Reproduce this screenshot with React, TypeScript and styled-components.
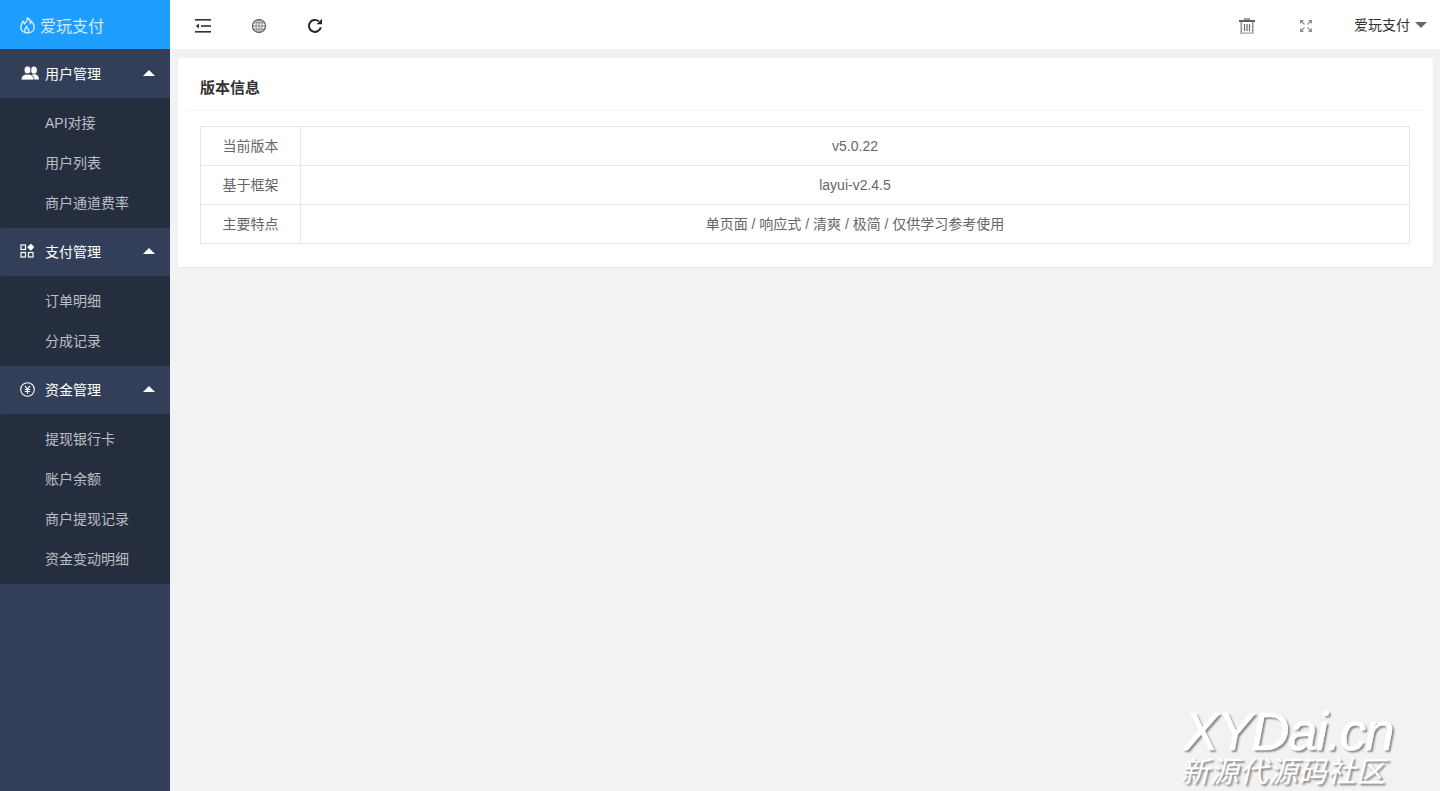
import styled, { createGlobalStyle } from "styled-components";

const GlobalStyle = createGlobalStyle`
    html, body {
        margin: 0;
        padding: 0;
        height: 100%;
    }
    body {
        font-family: "Liberation Sans", "Noto Sans CJK SC", sans-serif;
        font-size: 14px;
        color: #666;
        background: #f2f2f2;
        overflow: hidden;
    }
`;

const Page = styled.div`
    display: flex;
    height: 791px;
    position: relative;
`;
const Side = styled.aside`
    width: 170px;
    flex-shrink: 0;
    background: #333f58;
`;
const Logo = styled.div`
    height: 49px;
    box-sizing: border-box;
    padding: 1px 0 0 20px;
    margin-bottom: 1px;
    background: #1e9fff;
    display: flex;
    align-items: center;
    gap: 5px;
    font-size: 16px;
    color: rgba(255, 255, 255, 0.8);
`;
const GroupTitle = styled.div`
    height: 48px;
    box-sizing: border-box;
    display: flex;
    align-items: center;
    padding: 0 15px 2px 20px;
    color: #fff;
    font-size: 14px;
`;
const GroupIcon = styled.span`
    width: 15px;
    height: 15px;
    display: flex;
    align-items: center;
    margin-right: 10px;
    svg {
        flex-shrink: 0;
    }
`;
const Caret = styled.span`
    margin-left: auto;
    width: 0;
    height: 0;
    border-left: 6px solid transparent;
    border-right: 6px solid transparent;
    border-bottom: 6px solid #fff;
`;
const SubMenu = styled.div`
    background: #252e3f;
    padding: 5px 0;
    border-radius: 2px;
`;
const SubItem = styled.div`
    height: 40px;
    line-height: 40px;
    padding-left: 45px;
    color: rgba(255, 255, 255, 0.7);
`;
const Main = styled.main`
    flex: 1;
    min-width: 0;
`;
const TopBar = styled.header`
    height: 49px;
    box-sizing: border-box;
    background: #fff;
    display: flex;
    align-items: center;
    padding: 3px 13px 0 25px;
`;
const ToolIcon = styled.span<{ $gap: number }>`
    width: 16px;
    height: 16px;
    display: flex;
    margin-right: ${(p) => p.$gap}px;
`;
const RightTools = styled.div`
    margin-left: auto;
    display: flex;
    align-items: center;
`;
const UserName = styled.span`
    color: #333;
    font-size: 14px;
    margin: -5px 5px 0 0;
`;
const UserCaret = styled.span`
    width: 0;
    height: 0;
    margin-top: -2px;
    border-left: 6px solid transparent;
    border-right: 6px solid transparent;
    border-top: 6px solid #666;
`;
const Content = styled.div`
    padding: 9px 7px 0 8px;
`;
const Card = styled.section`
    background: #fff;
    border-radius: 2px;
    box-shadow: 0 1px 2px rgba(0, 0, 0, 0.05);
    padding: 0 7px;
    height: 209px;
    box-sizing: border-box;
`;
const CardHead = styled.div`
    height: 53px;
    line-height: 59px;
    padding-left: 15px;
    box-sizing: border-box;
    border-bottom: 1px solid #f6f6f6;
    color: #333;
    font-size: 15px;
    font-weight: 700;
`;
const CardBody = styled.div`
    padding: 15px 16px 0 15px;
`;
const Table = styled.table`
    width: 100%;
    border-collapse: collapse;
    table-layout: fixed;
`;
const Cell = styled.td<{ $head?: boolean; $cjk?: boolean }>`
    border: 1px solid #e6e6e6;
    height: ${(p) => (p.$cjk ? "36px" : "38px")};
    padding: 0 0 ${(p) => (p.$cjk ? "2px" : "0")};
    text-align: center;
    font-size: 14px;
    color: #666;
    width: ${(p) => (p.$head ? "99px" : "auto")};
`;
const Watermark = styled.div`
    position: absolute;
    right: 47px;
    bottom: 4px;
    color: #fff;
    font-style: italic;
    text-shadow: 2px 2px 2px rgba(0, 0, 0, 0.45);
    pointer-events: none;
`;
const MarkLatin = styled.div`
    font-size: 53px;
    line-height: 50px;
    letter-spacing: -1.400px;
    -webkit-text-stroke: 0.6px #fff;
`;
const MarkCjk = styled.div`
    font-size: 29px;
    line-height: 30px;
    letter-spacing: 0.3px;
    margin-left: -3px;
`;

const FlameIcon = () => (
    <svg width="15" height="17" viewBox="0 0 15 17" fill="none" stroke="rgba(255,255,255,0.85)" strokeWidth="1.300">
        <path d="M7.500 16C3.400 16 .8 13.600.8 10.200.8 7.800 2.200 6 3 4.200c.8.700 1.300 1.500 1.500 2.500C6.200 5.200 7.700 3 7.400.8c2.200 1.200 3.100 3.400 3 5.600.6-.5 1-1.200 1.100-2 1.700 1.600 2.700 3.700 2.700 5.800 0 3.400-2.600 5.800-6.700 5.800z" />
        <path d="M5.200 15.500c-1-2-.4-3.800 1.500-6 .1 1.600 1.100 2 1.800 3.100.6 1 .6 2 .1 2.900" />
    </svg>
);
const UsersIcon = () => (
    <svg width="18" height="14" viewBox="0 0 18 14" style={{ marginLeft: 1 }}>
        <g fill="#fff">
            <ellipse cx="13" cy="4.200" rx="2.900" ry="3.600" />
            <path d="M9 13.500c0-3 1.600-4.600 3-5.300h2.500c2 .7 3.500 2.300 3.500 5.300z" />
        </g>
        <g fill="#fff" stroke="#333f58" strokeWidth="0.800">
            <ellipse cx="6.500" cy="4" rx="3.500" ry="4" />
            <path d="M0 14c0-3.500 1.800-5 4.500-5.800h4c2.700.8 4.500 2.300 4.500 5.800z" />
        </g>
    </svg>
);
const AppsIcon = () => (
    <svg width="14" height="14" viewBox="0 0 14 14" fill="none" stroke="#fff" strokeWidth="1.200">
        <rect x="1" y="1" width="4.500" height="4.500" />
        <rect x="1" y="8.500" width="4.500" height="4.500" />
        <rect x="8.500" y="8.500" width="4.500" height="4.500" />
        <path d="M10.800.5l2.700 2.700-2.700 2.700-2.700-2.700z" fill="#fff" />
    </svg>
);
const YuanIcon = () => (
    <svg width="15" height="15" viewBox="0 0 15 15" fill="none" stroke="#fff" strokeWidth="1.100">
        <circle cx="7.500" cy="7.500" r="6.800" />
        <path d="M5 3.800l2.500 3.400L10 3.800M7.500 7.200v4.500M4.800 7.500h5.400M4.800 9.500h5.400" />
    </svg>
);
const IndentIcon = () => (
    <svg width="16" height="16" viewBox="0 0 16 16" fill="#333">
        <rect x="0" y="1" width="16" height="1.600" />
        <rect x="6" y="7.200" width="10" height="1.600" />
        <rect x="0" y="13" width="16" height="1.600" />
        <path d="M4 5.500v5L0.800 8z" />
    </svg>
);
const GlobeIcon = () => (
    <svg width="16" height="16" viewBox="0 0 16 16" fill="none">
        <g stroke="#7d8288" strokeWidth="1">
            <ellipse cx="8" cy="8" rx="3" ry="6.500" />
            <path d="M8 1.500v13M1.500 8h13M2.500 4.800h11M2.500 11.200h11" />
        </g>
        <circle cx="8" cy="8" r="6.500" stroke="#5d5348" strokeWidth="1.200" />
    </svg>
);
const RefreshIcon = () => (
    <svg width="16" height="16" viewBox="0 0 16 16" fill="none" stroke="#222" strokeWidth="1.900">
        <path d="M13.800 9.200A6 6 0 1 1 11.800 3.300" />
        <path d="M15 .8v5.400H9.600z" fill="#222" stroke="none" />
    </svg>
);
const TrashIcon = () => (
    <svg width="16" height="16" viewBox="0 0 16 16" fill="none">
        <path d="M5.500 1.500V1h5v.500" stroke="#444" strokeWidth="1.200" />
        <path d="M0 3h16" stroke="#333" strokeWidth="1.600" />
        <path d="M2.200 3.500v11.800h11.600V3.500" stroke="#777" strokeWidth="1.200" />
        <path d="M2 15.300h12" stroke="#bbb" strokeWidth="1.400" />
        <path d="M5.500 6v7M8 6v7M10.500 6v7" stroke="#6b6078" strokeWidth="1.200" />
    </svg>
);
const ExpandIcon = () => (
    <svg width="16" height="16" viewBox="0 0 16 16" fill="none" stroke="#8a8c92" strokeWidth="1.100">
        <path d="M3.500 3.500L6.500 6.500M12.500 3.500L9.500 6.500M3.500 12.500L6.500 9.500M12.500 12.500L9.500 9.500" />
        <path d="M2 2h4L2 6zM14 2h-4l4 4zM2 14h4l-4-4zM14 14h-4l4-4z" fill="#8a8c92" stroke="none" />
    </svg>
);

const menu = [
    { title: "用户管理", icon: <UsersIcon />, items: ["API对接", "用户列表", "商户通道费率"] },
    { title: "支付管理", icon: <AppsIcon />, items: ["订单明细", "分成记录"] },
    { title: "资金管理", icon: <YuanIcon />, items: ["提现银行卡", "账户余额", "商户提现记录", "资金变动明细"] },
];
const versionRows = [
    { label: "当前版本", value: "v5.0.22", cjk: false },
    { label: "基于框架", value: "layui-v2.4.5", cjk: false },
    { label: "主要特点", value: "单页面 / 响应式 / 清爽 / 极简 / 仅供学习参考使用", cjk: true },
];

export default function App() {
    return (
        <>
            <GlobalStyle />
            <Page>
                <Side>
                    <Logo><FlameIcon />爱玩支付</Logo>
                    {menu.map((group) => (
                        <div key={group.title}>
                            <GroupTitle>
                                <GroupIcon>{group.icon}</GroupIcon>
                                {group.title}
                                <Caret />
                            </GroupTitle>
                            <SubMenu>
                                {group.items.map((item) => <SubItem key={item}>{item}</SubItem>)}
                            </SubMenu>
                        </div>
                    ))}
                </Side>
                <Main>
                    <TopBar>
                        <ToolIcon $gap={40}><IndentIcon /></ToolIcon>
                        <ToolIcon $gap={40}><GlobeIcon /></ToolIcon>
                        <ToolIcon $gap={0}><RefreshIcon /></ToolIcon>
                        <RightTools>
                            <ToolIcon $gap={43}><TrashIcon /></ToolIcon>
                            <ToolIcon $gap={40}><ExpandIcon /></ToolIcon>
                            <UserName>爱玩支付</UserName>
                            <UserCaret />
                        </RightTools>
                    </TopBar>
                    <Content>
                        <Card>
                            <CardHead>版本信息</CardHead>
                            <CardBody>
                                <Table>
                                    <tbody>
                                        {versionRows.map((row) => (
                                            <tr key={row.label}>
                                                <Cell $head $cjk>{row.label}</Cell>
                                                <Cell $cjk={row.cjk}>{row.value}</Cell>
                                            </tr>
                                        ))}
                                    </tbody>
                                </Table>
                            </CardBody>
                        </Card>
                    </Content>
                </Main>
                <Watermark>
                    <MarkLatin>XYDai.cn</MarkLatin>
                    <MarkCjk>新源代源码社区</MarkCjk>
                </Watermark>
            </Page>
        </>
    );
}
